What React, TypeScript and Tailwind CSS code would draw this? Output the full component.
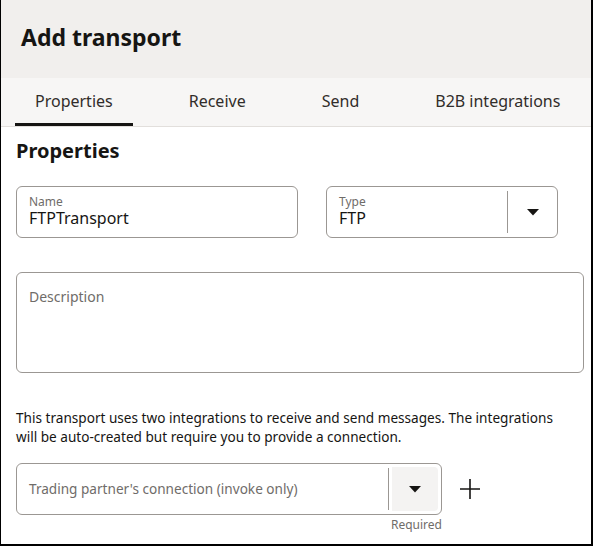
export default function App() {
  const tabs = ["Properties", "Receive", "Send", "B2B integrations"];
  const active = "Properties";

  return (
    <div className="h-[546px] w-[593px] overflow-hidden border-b-2 border-l border-r-2 border-black bg-white font-['Noto_Sans',sans-serif] text-[#161513]">
      {/* header */}
      <div className="flex h-[78px] items-center bg-[#f1efed] pb-[4px] pl-[20px]">
        <h1 className="text-[23px] font-bold">Add transport</h1>
      </div>

      {/* tabs */}
      <div className="flex h-[49px] gap-[36px] border-b border-[#e2dfdc] bg-[#f7f6f5] pl-[14px]">
        {tabs.map((t) => (
          <div
            key={t}
            className={`flex items-center border-b-[3px] px-5 text-[16px] text-[#312d2a] ${
              t === active ? "border-[#161513]" : "border-transparent"
            }`}
          >
            {t}
          </div>
        ))}
      </div>

      <div className="px-[15px] pt-[10px]">
        <h2 className="text-[20px] font-bold leading-[28px]">Properties</h2>

        {/* name + type */}
        <div className="mt-[21px] flex gap-[28px]">
          <div className="h-[52px] w-[282px] rounded-[6px] border border-[#9b9793] pl-[12px] pt-[7px]">
            <div className="text-[12px] leading-[16px] text-[#6f6c69]">Name</div>
            <div className="text-[16px] leading-[16px]">FTPTransport</div>
          </div>
          <div className="flex h-[52px] w-[232px] rounded-[6px] border border-[#9b9793]">
            <div className="flex-1 pl-[12px] pt-[7px]">
              <div className="text-[12px] leading-[16px] text-[#6f6c69]">Type</div>
              <div className="text-[16px] leading-[16px]">FTP</div>
            </div>
            <div className="my-[4px] w-px bg-[#9b9793]" />
            <div className="flex w-[49px] items-center justify-center">
              <Caret />
            </div>
          </div>
        </div>

        {/* description */}
        <div className="mt-[34px] h-[101px] w-[568px] rounded-[6px] border border-[#9b9793] pl-[12px] pt-[14px]">
          <div className="text-[14px] leading-[20px] text-[#6f6c69]">Description</div>
        </div>

        <p className="mt-[35px] text-[13.6px] leading-[19px]">
          This transport uses two integrations to receive and send messages. The integrations
          <br />
          will be auto-created but require you to provide a connection.
        </p>

        {/* connection */}
        <div className="mt-[17px] flex items-start gap-[17px]">
          <div>
            <div className="flex h-[52px] w-[426px] rounded-[6px] border border-[#9b9793]">
              <div className="flex flex-1 items-center pl-[12px] text-[13.6px] text-[#6f6c69]">
                Trading partner's connection (invoke only)
              </div>
              <div className="my-[4px] w-px bg-[#9b9793]" />
              <div className="m-[3px] flex w-[46px] items-center justify-center rounded-r-[4px] bg-[#f4f3f2]">
                <Caret />
              </div>
            </div>
            <div className="mt-[2px] text-right text-[12px] leading-[16px] text-[#6f6c69]">Required</div>
          </div>
          <div className="flex h-[52px] items-center">
            <svg width="22" height="22" viewBox="0 0 22 22" fill="none" stroke="#161513" strokeWidth="1.6">
              <path d="M11 1v20M1 11h20" />
            </svg>
          </div>
        </div>
      </div>
    </div>
  );
}

function Caret() {
  return (
    <svg width="12" height="7" viewBox="0 0 12 7">
      <path d="M0 0h12L6 6.5z" fill="#161513" />
    </svg>
  );
}
